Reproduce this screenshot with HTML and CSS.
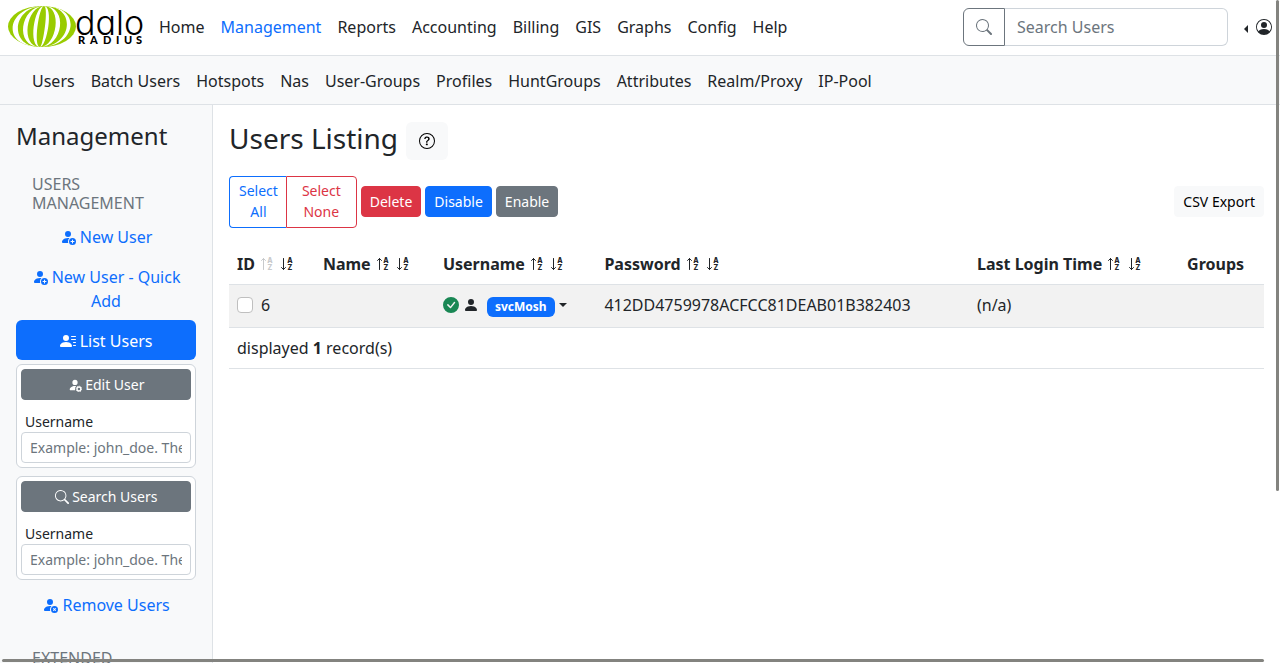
FILE: index.html
```html
<!DOCTYPE html>
<html lang="en">
<head>
<meta charset="utf-8">
<meta name="viewport" content="width=device-width, initial-scale=1">
<title>Users Listing</title>
<link rel="stylesheet" href="styles.css">
</head>
<body>
<svg class="sprite" aria-hidden="true">
  <symbol id="search" viewBox="0 0 16 16"><path d="M11.742 10.344a6.5 6.5 0 1 0-1.397 1.398h-.001c.03.04.062.078.098.115l3.85 3.85a1 1 0 0 0 1.415-1.414l-3.85-3.85a1.007 1.007 0 0 0-.115-.1zM12 6.5a5.5 5.5 0 1 1-11 0 5.5 5.5 0 0 1 11 0z"/></symbol>
  <symbol id="person-circle" viewBox="0 0 16 16"><path d="M11 6a3 3 0 1 1-6 0 3 3 0 0 1 6 0z"/><path fill-rule="evenodd" d="M0 8a8 8 0 1 1 16 0A8 8 0 0 1 0 8zm8-7a7 7 0 0 0-5.468 11.37C3.242 11.226 4.805 10 8 10s4.757 1.225 5.468 2.37A7 7 0 0 0 8 1z"/></symbol>
  <symbol id="person-add" viewBox="0 0 16 16"><path d="M12.5 16a3.5 3.5 0 1 0 0-7 3.5 3.5 0 0 0 0 7Zm.5-5v1h1a.5.5 0 0 1 0 1h-1v1a.5.5 0 0 1-1 0v-1h-1a.5.5 0 0 1 0-1h1v-1a.5.5 0 0 1 1 0Zm-2-6a3 3 0 1 1-6 0 3 3 0 0 1 6 0Z"/><path d="M2 13c0 1 1 1 1 1h5.256A4.493 4.493 0 0 1 8 12.5a4.49 4.49 0 0 1 1.544-3.393C9.077 9.038 8.564 9 8 9c-5 0-6 3-6 4Z"/></symbol>
  <symbol id="person-x" viewBox="0 0 16 16"><path d="M11 5a3 3 0 1 1-6 0 3 3 0 0 1 6 0Zm-9 8c0 1 1 1 1 1h5.256A4.493 4.493 0 0 1 8 12.5a4.49 4.49 0 0 1 1.544-3.393C9.077 9.038 8.564 9 8 9c-5 0-6 3-6 4Z"/><path d="M12.5 16a3.5 3.5 0 1 0 0-7 3.5 3.5 0 0 0 0 7Zm-.646-4.854.646.647.646-.647a.5.5 0 0 1 .708.708l-.647.646.647.646a.5.5 0 0 1-.708.708l-.646-.647-.646.647a.5.5 0 0 1-.708-.708l.647-.646-.647-.646a.5.5 0 0 1 .708-.708Z"/></symbol>
  <symbol id="person-gear" viewBox="0 0 16 16"><path d="M11 5a3 3 0 1 1-6 0 3 3 0 0 1 6 0Zm-9 8c0 1 1 1 1 1h5.256A4.493 4.493 0 0 1 8 12.5a4.49 4.49 0 0 1 1.544-3.393C9.077 9.038 8.564 9 8 9c-5 0-6 3-6 4Z"/><circle cx="12.500" cy="12.500" r="2.200" fill="none" stroke="currentColor" stroke-width="1.500"/><circle cx="12.500" cy="12.500" r="3.200" fill="none" stroke="currentColor" stroke-width="1" stroke-dasharray="1.300 1.213"/></symbol>
  <symbol id="person-lines" viewBox="0 0 16 16"><path d="M6 8a3 3 0 1 0 0-6 3 3 0 0 0 0 6zm-5 6s-1 0-1-1 1-4 6-4 6 3 6 4-1 1-1 1H1zM11 3.5a.5.5 0 0 1 .5-.5h4a.5.5 0 0 1 0 1h-4a.5.5 0 0 1-.5-.5zm.5 2.5a.5.5 0 0 0 0 1h4a.5.5 0 0 0 0-1h-4zm2 3a.5.5 0 0 0 0 1h2a.5.5 0 0 0 0-1h-2zm0 3a.5.5 0 0 0 0 1h2a.5.5 0 0 0 0-1h-2z"/></symbol>
  <symbol id="person" viewBox="0 0 16 16"><path d="M3 14s-1 0-1-1 1-4 6-4 6 3 6 4-1 1-1 1H3zm5-6a3 3 0 1 0 0-6 3 3 0 0 0 0 6z"/></symbol>
  <symbol id="check" viewBox="0 0 16 16"><path d="M16 8A8 8 0 1 1 0 8a8 8 0 0 1 16 0zm-3.97-3.03a.75.75 0 0 0-1.08.022L7.477 9.417 5.384 7.323a.75.75 0 0 0-1.06 1.06L6.97 11.03a.75.75 0 0 0 1.079-.02l3.992-4.99a.75.75 0 0 0-.01-1.05z"/></symbol>
  <symbol id="question" viewBox="0 0 16 16"><path d="M8 15A7 7 0 1 1 8 1a7 7 0 0 1 0 14zm0 1A8 8 0 1 0 8 0a8 8 0 0 0 0 16z"/><path d="M5.255 5.786a.237.237 0 0 0 .241.247h.825c.138 0 .248-.113.266-.25.09-.656.54-1.134 1.342-1.134.686 0 1.314.343 1.314 1.168 0 .635-.374.927-.965 1.371-.673.489-1.206 1.06-1.168 1.987l.003.217a.25.25 0 0 0 .25.246h.811a.25.25 0 0 0 .25-.25v-.105c0-.718.273-.927 1.01-1.486.609-.463 1.244-.977 1.244-2.056 0-1.511-1.276-2.241-2.673-2.241-1.267 0-2.655.59-2.75 2.286zm1.557 5.763c0 .533.425.927 1.01.927.609 0 1.028-.394 1.028-.927 0-.552-.42-.94-1.029-.94-.584 0-1.009.388-1.009.94z"/></symbol>
  <symbol id="sort-up" viewBox="0 0 16 16"><path d="M4.5 13.5v-11M2.500 4.500l2-2l2 2" fill="none" stroke="currentColor" stroke-linecap="round" stroke-linejoin="round"/><text class="sort-letter" x="11" y="7" text-anchor="middle">A</text><text class="sort-letter" x="11" y="14" text-anchor="middle">Z</text></symbol>
  <symbol id="sort-down" viewBox="0 0 16 16"><path d="M4.5 2.5v11M2.500 11.500l2 2l2-2" fill="none" stroke="currentColor" stroke-linecap="round" stroke-linejoin="round"/><text class="sort-letter" x="11" y="7" text-anchor="middle">A</text><text class="sort-letter" x="11" y="14" text-anchor="middle">Z</text></symbol>
</svg>

<header class="topbar">
  <a class="brand" href="#" aria-label="daloRADIUS">
    <svg class="logo" viewBox="0 0 135 42">
      <defs><clipPath id="globe"><ellipse cx="34" cy="20.500" rx="34" ry="20.500"/></clipPath></defs>
      <g clip-path="url(#globe)">
        <rect width="68" height="41" fill="#99cc00"/>
        <g fill="#fff">
          <path d="M36 0C-2 0-8 41 32 41C0 41 4 0 36 0Z"/>
          <path d="M36 0C12 0 6 41 32 41C12 41 18 0 36 0Z"/>
          <path d="M36 0C26 0 20 41 32 41C25 41 31 0 36 0Z"/>
          <path d="M36 0C41 0 35 41 32 41C39 41 46 0 36 0Z"/>
          <path d="M36 0C55 0 49 41 32 41C55 41 61 0 36 0Z"/>
          <path d="M36 0C70 0 64 41 32 41C69 41 75 0 36 0Z"/>
        </g>
      </g>
      <text class="logo-name" x="67" y="29">dalo</text>
      <text class="logo-sub" x="70 82 95 108 116 128" y="38">RADIUS</text>
    </svg>
  </a>
  <nav class="menu" aria-label="Main">
    <a href="#">Home</a><a class="current" href="#">Management</a><a href="#">Reports</a><a href="#">Accounting</a><a href="#">Billing</a><a href="#">GIS</a><a href="#">Graphs</a><a href="#">Config</a><a href="#">Help</a>
  </nav>
  <form class="search">
    <button class="search-button" type="button" aria-label="Search"><svg class="icon"><use href="#search"/></svg></button>
    <input class="search-input" type="text" placeholder="Search Users" aria-label="Search Users">
  </form>
  <button class="account" type="button" aria-label="Account"><span class="caret-left"></span><svg class="icon"><use href="#person-circle"/></svg></button>
</header>

<nav class="menu subbar" aria-label="Management">
  <a href="#">Users</a><a href="#">Batch Users</a><a href="#">Hotspots</a><a href="#">Nas</a><a href="#">User-Groups</a><a href="#">Profiles</a><a href="#">HuntGroups</a><a href="#">Attributes</a><a href="#">Realm/Proxy</a><a href="#">IP-Pool</a>
</nav>

<div class="layout">
  <aside class="sidebar">
    <h2 class="side-title">Management</h2>
    <h3 class="side-heading">Users Management</h3>
    <a class="side-link" href="#"><svg class="icon"><use href="#person-add"/></svg> New User</a>
    <a class="side-link" href="#"><svg class="icon"><use href="#person-add"/></svg> New User - Quick Add</a>
    <a class="side-link active" href="#"><svg class="icon"><use href="#person-lines"/></svg> List Users</a>
    <form class="side-card">
      <button class="btn gray" type="button"><svg class="icon"><use href="#person-gear"/></svg> Edit User</button>
      <label class="side-label" for="edit-user">Username</label>
      <input class="side-input" id="edit-user" type="text" placeholder="Example: john_doe. The username">
    </form>
    <form class="side-card">
      <button class="btn gray" type="button"><svg class="icon"><use href="#search"/></svg> Search Users</button>
      <label class="side-label" for="search-user">Username</label>
      <input class="side-input" id="search-user" type="text" placeholder="Example: john_doe. The username">
    </form>
    <a class="side-link" href="#"><svg class="icon"><use href="#person-x"/></svg> Remove Users</a>
    <h3 class="side-heading">Extended Capabilities</h3>
  </aside>

  <main class="content">
    <div class="title-row">
      <h1 class="title">Users Listing</h1>
      <button class="help" type="button" aria-label="Help"><svg class="icon"><use href="#question"/></svg></button>
    </div>
    <div class="toolbar">
      <div class="select-group">
        <button class="btn outline-blue" type="button">Select<br>All</button>
        <button class="btn outline-red" type="button">Select<br>None</button>
      </div>
      <button class="btn red" type="button">Delete</button>
      <button class="btn blue" type="button">Disable</button>
      <button class="btn gray" type="button">Enable</button>
      <button class="btn light" type="button">CSV Export</button>
    </div>
    <table class="users">
      <colgroup><col class="col-id"><col class="col-name"><col class="col-user"><col class="col-pass"><col class="col-login"><col></colgroup>
      <thead>
        <tr>
          <th>ID <a class="sort off" href="#" aria-label="Ascending"><svg class="icon"><use href="#sort-up"/></svg></a> <a class="sort" href="#" aria-label="Descending"><svg class="icon"><use href="#sort-down"/></svg></a></th>
          <th>Name <a class="sort" href="#" aria-label="Ascending"><svg class="icon"><use href="#sort-up"/></svg></a> <a class="sort" href="#" aria-label="Descending"><svg class="icon"><use href="#sort-down"/></svg></a></th>
          <th>Username <a class="sort" href="#" aria-label="Ascending"><svg class="icon"><use href="#sort-up"/></svg></a> <a class="sort" href="#" aria-label="Descending"><svg class="icon"><use href="#sort-down"/></svg></a></th>
          <th>Password <a class="sort" href="#" aria-label="Ascending"><svg class="icon"><use href="#sort-up"/></svg></a> <a class="sort" href="#" aria-label="Descending"><svg class="icon"><use href="#sort-down"/></svg></a></th>
          <th>Last Login Time <a class="sort" href="#" aria-label="Ascending"><svg class="icon"><use href="#sort-up"/></svg></a> <a class="sort" href="#" aria-label="Descending"><svg class="icon"><use href="#sort-down"/></svg></a></th>
          <th>Groups</th>
        </tr>
      </thead>
      <tbody>
        <tr class="striped">
          <td><div class="cell"><input class="check" id="user-6" type="checkbox"><label for="user-6">6</label></div></td>
          <td></td>
          <td>
            <div class="cell user-cell">
              <svg class="icon ok"><use href="#check"/></svg>
              <svg class="icon"><use href="#person"/></svg>
              <button class="user-toggle" type="button"><span class="badge">svcMosh</span><span class="caret-down"></span></button>
            </div>
          </td>
          <td>412DD4759978ACFCC81DEAB01B382403</td>
          <td>(n/a)</td>
          <td></td>
        </tr>
      </tbody>
      <tfoot>
        <tr><td colspan="6">displayed <strong>1</strong> record(s)</td></tr>
      </tfoot>
    </table>
  </main>
</div>
<div class="scroll-y"></div>
<div class="scroll-x"></div>
</body>
</html>
```

FILE: styles.css
```css
* { box-sizing: border-box; }

body {
  margin: 0;
  height: 100vh;
  overflow: hidden;
  display: flex;
  flex-direction: column;
  font: 16px/24px "Noto Sans", "Liberation Sans", sans-serif;
  color: #212529;
  background: #fff;
}

button, input { font: inherit; }
button { cursor: pointer; }
a { color: inherit; text-decoration: none; }
.sprite { display: none; }

.icon {
  width: 1em;
  height: 1em;
  flex: none;
  fill: currentColor;
  vertical-align: -2px;
}

.topbar {
  display: flex;
  align-items: center;
  padding: 8px 8px 9px;
  border-bottom: 1px solid #dee2e6;
}

.brand { display: flex; margin-right: 8px; }
.logo { width: 135px; height: 42px; margin: -2px 0; overflow: visible; }
.logo-name { font: 300 34px Inter, sans-serif; font-feature-settings: "cv11"; fill: #000; }
.logo-sub { font: 900 11px Lato, sans-serif; fill: #000; }

.menu { display: flex; }
.menu a { padding: 0 8px; white-space: nowrap; }
.menu .current { color: #0d6efd; }

.search { display: flex; margin-left: auto; width: 265px; height: 38px; }
.search-button {
  width: 42px;
  padding: 0;
  color: #6c757d;
  background: #fff;
  border: 1px solid #6c757d;
  border-radius: 6px 0 0 6px;
}
.search-input {
  flex: 1;
  min-width: 0;
  padding: 0 12px;
  border: 1px solid #ced4da;
  border-left: 0;
  border-radius: 0 6px 6px 0;
}
::placeholder { color: #6c757d; opacity: 1; }

.account {
  display: flex;
  align-items: center;
  gap: 8px;
  margin-left: 16px;
  padding: 0;
  color: inherit;
  background: none;
  border: 0;
}
.caret-left {
  margin-top: 4px;
  border: solid transparent;
  border-width: 4px 4px 4px 0;
  border-right-color: currentColor;
}

.subbar {
  padding: 13px 24px 11px;
  background: #f8f9fa;
  border-bottom: 1px solid #dee2e6;
}

.layout { flex: 1; min-height: 0; display: flex; }

.sidebar {
  flex: none;
  width: 213px;
  padding: 16px;
  overflow: hidden;
  background: #f8f9fa;
  border-right: 1px solid #dee2e6;
}
.side-title { margin: 0; font-size: 24px; line-height: 29px; font-weight: 400; }
.side-heading {
  margin: 25px 0 3px;
  padding: 0 16px;
  font-size: 16px;
  line-height: 19px;
  font-weight: 400;
  text-transform: uppercase;
  color: #6c757d;
}
.side-link {
  display: block;
  padding: 9px 12px 7px;
  border-radius: 6px;
  text-align: center;
  color: #0d6efd;
}
.side-link.active { color: #fff; background: #0d6efd; }
.side-card {
  display: flex;
  flex-direction: column;
  margin: 4px 0 8px;
  padding: 4px;
  background: #fff;
  border: 1px solid #ced4da;
  border-radius: 6px;
}
.side-card + .side-card { margin-bottom: 4px; }
.side-label { margin: 11px 4px 0; font-size: 14px; line-height: 21px; }
.side-input {
  width: 100%;
  height: 31px;
  padding: 4px 8px;
  font-size: 14px;
  border: 1px solid #ced4da;
  border-radius: 4px;
}

.content { flex: 1; min-width: 0; padding: 16px; }
.title-row { display: flex; align-items: flex-start; gap: 8px; }
.title { margin: 0; font-size: 28px; line-height: 34px; font-weight: 400; }
.help {
  width: 42px;
  height: 38px;
  margin-top: 1px;
  padding: 0;
  color: #000;
  background: #f8f9fa;
  border: 0;
  border-radius: 6px;
}

.toolbar { display: flex; align-items: center; gap: 4px; margin: 16px 0; }
.toolbar > .btn { margin-bottom: 1px; }
.btn {
  padding: 4px 8px;
  font-size: 14px;
  line-height: 21px;
  border: 1px solid transparent;
  border-radius: 4px;
  color: #fff;
}
.red { background: #dc3545; border-color: #dc3545; }
.blue { background: #0d6efd; border-color: #0d6efd; }
.gray { background: #6c757d; border-color: #6c757d; }
.light { margin-left: auto; color: #000; background: #f8f9fa; border-color: #f8f9fa; }
.select-group { display: flex; }
.outline-blue {
  padding: 3px 8px 5px 9px;
  color: #0d6efd;
  background: #fff;
  border-color: #0d6efd;
  border-right: 0;
  border-radius: 4px 0 0 4px;
}
.outline-red {
  padding: 3px 15px 5px;
  color: #dc3545;
  background: #fff;
  border-color: #dc3545;
  border-radius: 0 4px 4px 0;
}

.users { width: 100%; table-layout: fixed; border-collapse: collapse; }
.users th, .users td {
  padding: 8px;
  text-align: left;
  vertical-align: top;
  white-space: nowrap;
  border-bottom: 1px solid #dee2e6;
}
.col-id { width: 8.3%; }
.col-name { width: 11.6%; }
.col-user { width: 15.6%; }
.col-pass { width: 36%; }
.col-login { width: 20.3%; }
.striped { background: #f2f2f2; }
.off { color: #c8cacc; }
.sort-letter { font: 800 7px Inter, sans-serif; }

.cell { display: flex; align-items: center; gap: 8px; height: 24px; }
.user-cell { gap: 4px; margin-bottom: 2px; }
.check {
  appearance: none;
  width: 16px;
  height: 16px;
  margin: 0;
  background: #fff;
  border: 1px solid #bfbfbf;
  border-radius: 4px;
}
.ok { color: #198754; }
.user-toggle {
  display: flex;
  align-items: center;
  gap: 4px;
  margin: 4px 0 0 4px;
  padding: 0;
  background: none;
  border: 0;
}
.badge {
  padding: 4px 8px;
  font-size: 12px;
  line-height: 12px;
  font-weight: 700;
  color: #fff;
  background: #0d6efd;
  border-radius: 6px;
}
.caret-down {
  margin-bottom: 4px;
  border: solid transparent;
  border-width: 4px 4px 0;
  border-top-color: #212529;
}

.scroll-y, .scroll-x { position: absolute; background: #83837f; border-radius: 2px; }
.scroll-y { top: 0; right: 1px; width: 3px; height: 74vh; }
.scroll-x { left: 2px; right: 16px; bottom: 1px; height: 3px; }
```
